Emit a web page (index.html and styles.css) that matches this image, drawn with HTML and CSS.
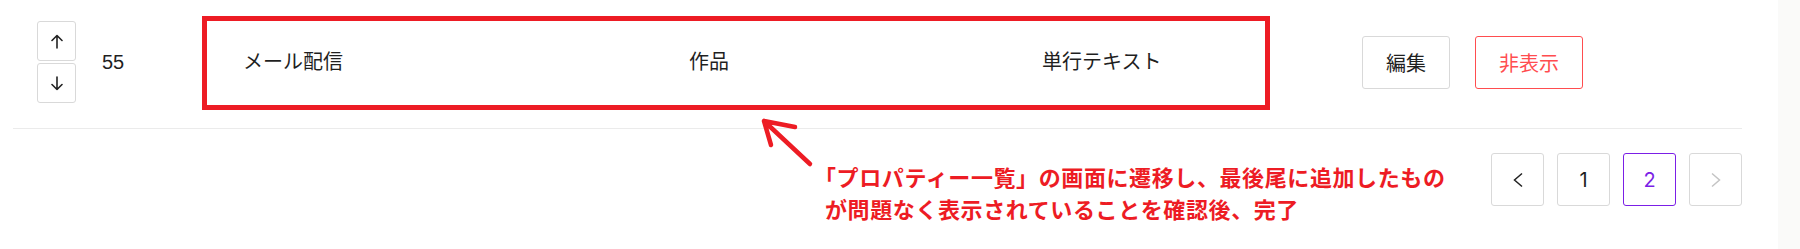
FILE: index.html
```html
<!DOCTYPE html>
<html lang="ja">
<head>
    <meta charset="UTF-8">
    <title>プロパティー一覧</title>
    <link rel="stylesheet" href="styles.css">
</head>
<body>
<div id="page">
    <div id="main">
        <div class="row">
            <div class="sort">
                <span class="sort-btn">
                    <svg width="12" height="15" viewBox="0 0 12 15"><path d="M6 1.5V14M1 6.5L6 1.5L11 6.5" fill="none" stroke="#222" stroke-width="1.6" stroke-linecap="round" stroke-linejoin="round"/></svg>
                </span>
                <span class="sort-btn">
                    <svg width="12" height="15" viewBox="0 0 12 15"><path d="M6 1V13.5M1 8.5L6 13.5L11 8.5" fill="none" stroke="#222" stroke-width="1.6" stroke-linecap="round" stroke-linejoin="round"/></svg>
                </span>
            </div>
            <div class="cell num">55</div>
            <div class="cell">メール配信</div>
            <div class="cell">作品</div>
            <div class="cell">単行テキスト</div>
            <div class="actions">
                <span class="btn">編集</span>
                <span class="btn btn-danger">非表示</span>
            </div>
        </div>
        <div class="pager">
            <span class="page">
                <svg width="12" height="16" viewBox="0 0 12 16"><path d="M10 1.5L2.5 8L10 14.5" fill="none" stroke="#222" stroke-width="1.5"/></svg>
            </span>
            <span class="page">1</span>
            <span class="page current">2</span>
            <span class="page off">
                <svg width="12" height="16" viewBox="0 0 12 16"><path d="M2 1.5L9.5 8L2 14.5" fill="none" stroke="#c4c4c4" stroke-width="1.5"/></svg>
            </span>
        </div>

        <!-- 注釈 -->
        <div class="mark-box"></div>
        <svg class="mark-arrow" width="60" height="60" viewBox="0 0 60 60">
            <path d="M4 4L50 47M4 4L35 10M4 4L11 28" fill="none" stroke="#ed1c24" stroke-width="4.5" stroke-linecap="round"/>
        </svg>
        <p class="mark-note">「プロパティー一覧」の画面に遷移し、最後尾に追加したもの<br>が問題なく表示されていることを確認後、完了</p>
    </div>
    <div id="side"></div>
</div>
</body>
</html>
```

FILE: styles.css
```css
*{
    margin: 0;
    padding: 0;
    box-sizing: border-box;
}
body{
    font-family: Inter, "Noto Sans CJK JP", sans-serif;
    color: #1f1f1f;
    background: #fafaf9;
}
#page{
    display: flex;
    height: 249px;
}
#main{
    width: 1778px;
    height: 249px;
    background: #fff;
    position: relative;
}
#side{
    flex: 1;
}
.row{
    margin-left: 13px;
    width: 1729px;
    padding: 21px 0 25px 24px;
    border-bottom: 1px solid #ebebeb;
    display: grid;
    grid-template-columns: 65px 141px 446px 353px 320px auto;
    align-items: center;
}
.sort{
    display: flex;
    flex-direction: column;
    gap: 2px;
    width: 39px;
}
.sort-btn{
    height: 40px;
    border: 1px solid #d9d9d9;
    border-radius: 3px;
    display: flex;
    align-items: center;
    justify-content: center;
}
.cell{
    font-size: 20px;
    line-height: 28px;
}
.num{
    font-family: "Liberation Sans", sans-serif;
}
.actions{
    display: flex;
    gap: 25px;
}
.btn{
    height: 53px;
    padding: 0 23px;
    border: 1px solid #d9d9d9;
    border-radius: 3px;
    font-size: 20px;
    display: flex;
    align-items: center;
}
.btn-danger{
    border-color: #ff4d4f;
    color: #ff4d4f;
}
.pager{
    display: flex;
    justify-content: flex-end;
    gap: 13px;
    width: 1742px;
    margin-top: 24px;
}
.page{
    width: 53px;
    height: 53px;
    border: 1px solid #d9d9d9;
    border-radius: 3px;
    font-size: 20px;
    display: flex;
    align-items: center;
    justify-content: center;
}
.page.current{
    border-color: #7b1fe6;
    color: #7b1fe6;
}
.mark-box{
    position: absolute;
    left: 202px;
    top: 16px;
    width: 1068px;
    height: 94px;
    border: 5px solid #ed1c24;
}
.mark-arrow{
    position: absolute;
    left: 760px;
    top: 117px;
}
.mark-note{
    position: absolute;
    left: 825px;
    top: 160px;
    font-family: "Noto Sans CJK JP", sans-serif;
    font-size: 22px;
    line-height: 32px;
    font-weight: 700;
    letter-spacing: 0.6px;
    text-indent: -11px;
    color: #ed1c24;
    white-space: nowrap;
}
```
